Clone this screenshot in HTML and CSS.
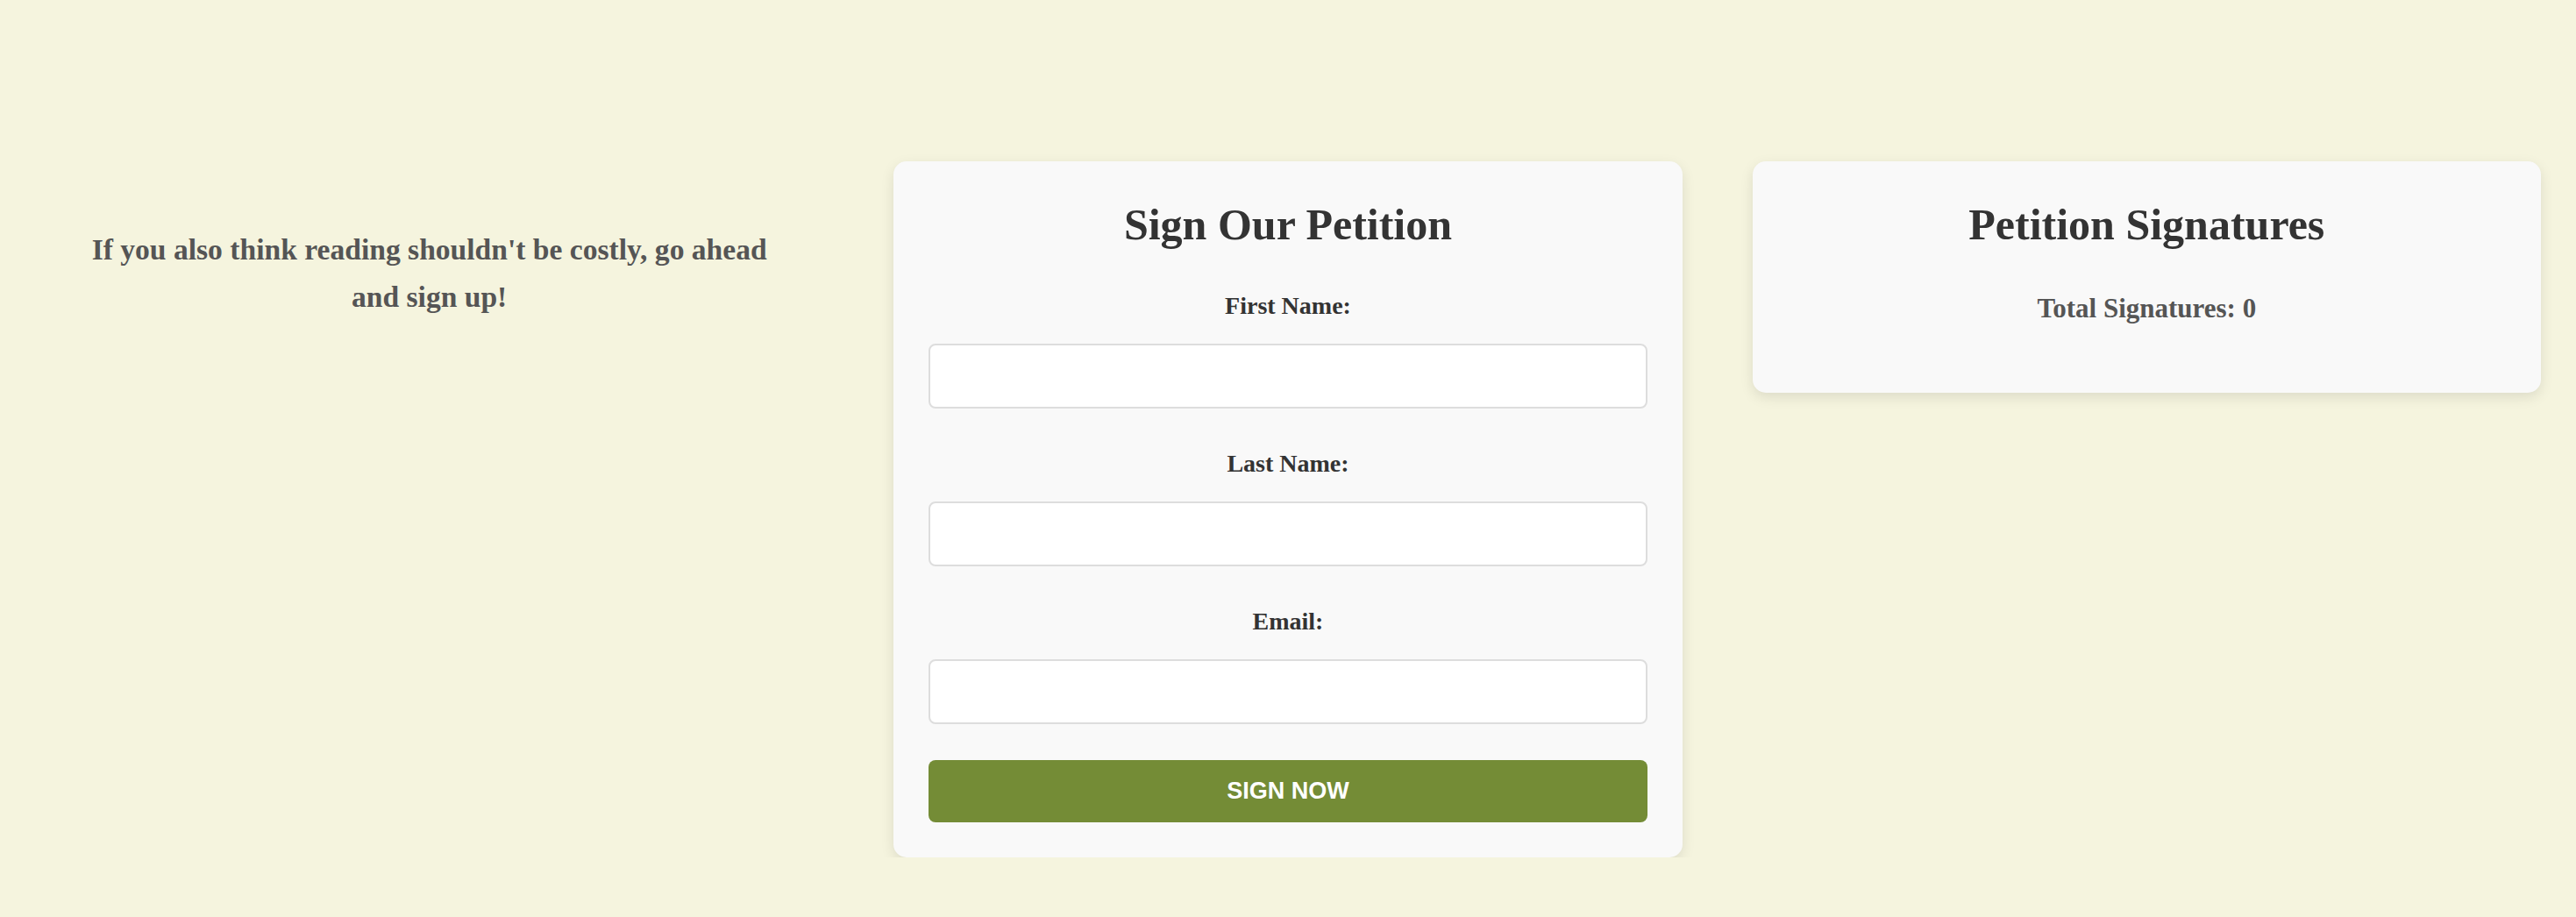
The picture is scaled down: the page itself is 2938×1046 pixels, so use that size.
FILE: index.html
```html
<!DOCTYPE html>
<html lang="en">
<head>
<meta charset="utf-8">
<title>Sign Our Petition</title>
<link rel="stylesheet" href="styles.css">
</head>
<body>
<main class="layout">
  <section class="intro">
    <p class="intro-text">If you also think reading shouldn't be costly, go ahead and sign up!</p>
  </section>
  <section class="card">
    <h2 class="card-title">Sign Our Petition</h2>
    <form class="petition-form">
      <div class="field">
        <label class="field-label" for="first">First Name:</label>
        <input class="field-input" id="first" type="text">
      </div>
      <div class="field">
        <label class="field-label" for="last">Last Name:</label>
        <input class="field-input" id="last" type="text">
      </div>
      <div class="field">
        <label class="field-label" for="email">Email:</label>
        <input class="field-input" id="email" type="email">
      </div>
      <button class="submit-btn" type="button">Sign Now</button>
    </form>
  </section>
  <section class="card">
    <h2 class="card-title">Petition Signatures</h2>
    <p class="total">Total Signatures: 0</p>
  </section>
</main>
</body>
</html>
```
FILE: styles.css
```css
* { box-sizing: border-box; }
html, body { margin: 0; padding: 0; }
body {
  background: #f5f4de;
  font-family: "Liberation Serif", "Times New Roman", serif;
  color: #333;
}
.layout {
  display: grid;
  grid-template-columns: 1fr 1fr 1fr;
  gap: 80px;
  padding: 184px 40px 0;
  align-items: start;
}
.intro {
  padding: 40px;
  text-align: center;
}
.intro-text {
  max-width: 800px;
  margin: 34px auto 0;
  font-size: 33.6px;
  line-height: 54px;
  font-weight: bold;
  color: #555;
}
.card {
  background: #f9f9f9;
  border-radius: 15px;
  padding: 40px;
  box-shadow: 0 5px 15px rgba(0, 0, 0, 0.1);
  text-align: center;
}
.card-title {
  margin: 4px 0 0;
  font-size: 50px;
  line-height: 1.15;
  font-weight: bold;
  color: #333;
}
.petition-form {
  display: flex;
  flex-direction: column;
  margin-top: 47px;
}
.field {
  display: flex;
  flex-direction: column;
  margin-bottom: 47px;
}
.field:last-of-type { margin-bottom: 41px; }
.field-label {
  font-size: 28px;
  line-height: 32px;
  font-weight: bold;
  color: #333;
  margin-bottom: 27px;
}
.field-input {
  height: 74px;
  border: 2px solid #ddd;
  border-radius: 8px;
  background: #fff;
  font-size: 24px;
  padding: 0 16px;
}
.submit-btn {
  height: 71px;
  border: none;
  border-radius: 8px;
  background: #748c36;
  color: #fff;
  font-family: "Liberation Sans", Arial, sans-serif;
  font-weight: bold;
  font-size: 27px;
  text-transform: uppercase;
}
.total {
  margin: 48px 0 39px;
  font-size: 31px;
  line-height: 35px;
  font-weight: bold;
  color: #555;
}
```
